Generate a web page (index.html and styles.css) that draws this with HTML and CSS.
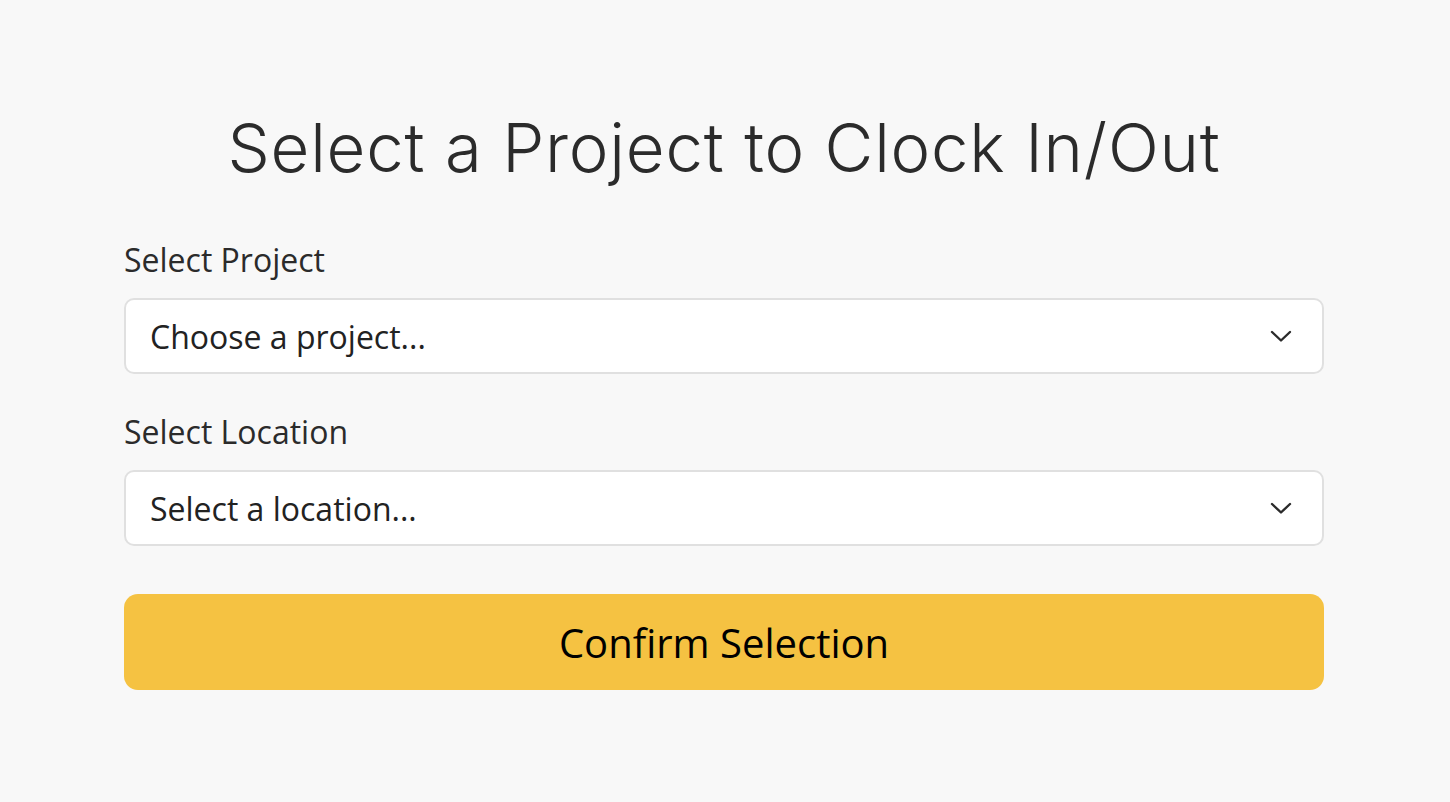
FILE: index.html
```html
<!DOCTYPE html>
<html lang="en">
<head>
<meta charset="utf-8">
<title>Select a Project</title>
<link rel="stylesheet" href="styles.css">
</head>
<body>
<main class="page">
  <h1 class="title">Select a Project to Clock In/Out</h1>
  <form class="form">
    <div class="field">
      <label class="label">Select Project</label>
      <div class="select">
        <span class="select-text">Choose a project...</span>
        <svg class="chevron" width="22" height="13" viewBox="0 0 22 13"><path d="M2 2 L11 10.5 L20 2" fill="none" stroke="#2b2b2b" stroke-width="2.4" stroke-linecap="round" stroke-linejoin="round"/></svg>
      </div>
    </div>
    <div class="field">
      <label class="label">Select Location</label>
      <div class="select">
        <span class="select-text">Select a location...</span>
        <svg class="chevron" width="22" height="13" viewBox="0 0 22 13"><path d="M2 2 L11 10.5 L20 2" fill="none" stroke="#2b2b2b" stroke-width="2.4" stroke-linecap="round" stroke-linejoin="round"/></svg>
      </div>
    </div>
    <button type="button" class="confirm">Confirm Selection</button>
  </form>
</main>
</body>
</html>
```
FILE: styles.css
```css
html, body {
  margin: 0;
  padding: 0;
  background: #f8f8f8;
}
body {
  font-family: "Open Sans", "Liberation Sans", sans-serif;
  color: #222;
}
.page {
  width: 1200px;
  margin: 0 0 0 calc(50% - 601px);
  padding-top: 104px;
}
.title {
  margin: 0 0 46px;
  text-align: center;
  font-family: Inter, "Open Sans", sans-serif;
  font-weight: 300;
  font-size: 67px;
  line-height: 88px;
  color: #2b2b2b;
  letter-spacing: 0.8px;
}
.form {
  display: flex;
  flex-direction: column;
}
.field {
  display: flex;
  flex-direction: column;
  gap: 16px;
  margin-bottom: 36px;
}
.field + .confirm {
  margin-top: 12px;
}
.label {
  font-size: 32px;
  line-height: 44px;
  color: #2b2b2b;
}
.select {
  box-sizing: border-box;
  height: 76px;
  background: #fff;
  border: 2px solid #e0e0e0;
  border-radius: 10px;
  display: flex;
  align-items: center;
  justify-content: space-between;
  padding: 0 30px 0 24px;
}
.select-text {
  font-size: 32px;
  color: #222;
}
.chevron {
  display: block;
}
.confirm {
  height: 96px;
  border: none;
  border-radius: 14px;
  background: #f5c242;
  font-family: "Open Sans", "Liberation Sans", sans-serif;
  font-size: 40px;
  color: #000;
  cursor: pointer;
}
```
